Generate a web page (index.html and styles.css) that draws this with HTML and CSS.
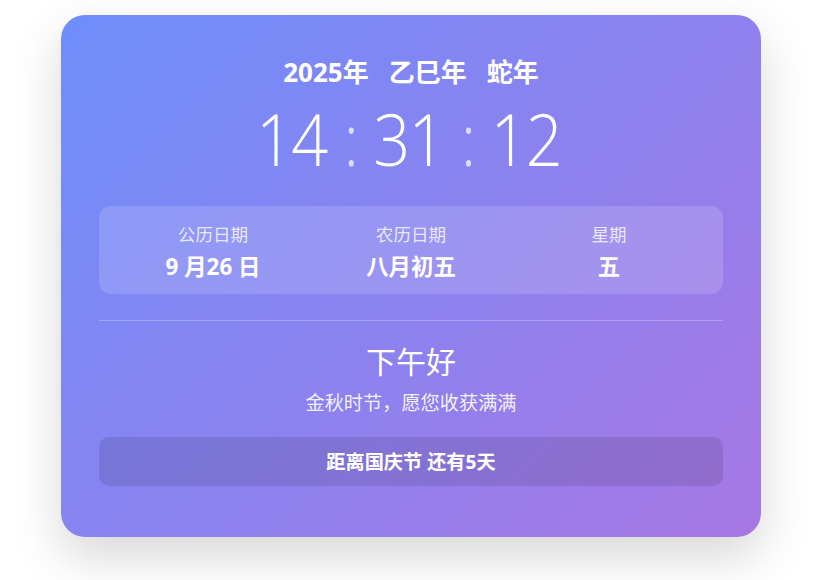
FILE: index.html
```html
<!DOCTYPE html>
<html lang="zh-CN">
<head>
<meta charset="utf-8">
<title>时钟</title>
<link rel="stylesheet" href="styles.css">
</head>
<body>
<div class="card">
  <div class="year-line">
    <span>2025年</span>
    <span>乙巳年</span>
    <span>蛇年</span>
  </div>
  <div class="clock">
    <span class="clock-inner"><span class="num">14</span><span class="colon">:</span><span class="num">31</span><span class="colon">:</span><span class="num">12</span></span>
  </div>
  <div class="info">
    <div class="info-item">
      <div class="info-label">公历日期</div>
      <div class="info-value">9 月26 日</div>
    </div>
    <div class="info-item">
      <div class="info-label">农历日期</div>
      <div class="info-value">八月初五</div>
    </div>
    <div class="info-item">
      <div class="info-label">星期</div>
      <div class="info-value">五</div>
    </div>
  </div>
  <div class="divider"></div>
  <div class="greeting">下午好</div>
  <div class="wish">金秋时节，愿您收获满满</div>
  <div class="countdown">距离国庆节 还有5天</div>
</div>
</body>
</html>
```

FILE: styles.css
```css
html, body {
  margin: 0;
  padding: 0;
  background: #ffffff;
}

body {
  min-height: 580px;
  padding: 15px 0 43px;
  box-sizing: border-box;
  font-family: "Open Sans", "Noto Sans CJK SC", sans-serif;
  color: #ffffff;
}

.card {
  box-sizing: border-box;
  width: 700px;
  margin: 0 0 0 61px;
  padding: 38px 38px 51px;
  border-radius: 24px;
  background: linear-gradient(135deg, #6e8efb 0%, #a777e3 100%);
  box-shadow: 0 20px 50px rgba(0, 0, 0, 0.16);
  text-align: center;
}

.year-line {
  display: flex;
  justify-content: center;
  gap: 20px;
  font-size: 26px;
  font-weight: 700;
  line-height: 38px;
  height: 38px;
}

.clock {
  margin-top: 2px;
  height: 90px;
  line-height: 90px;
  font-size: 72px;
  font-weight: 300;
  white-space: nowrap;
}

.clock-inner {
  display: inline-block;
  transform: scaleX(0.9);
  margin-right: 5px;
}

.clock .num {
  letter-spacing: -2px;
}

.clock .colon {
  margin: 0 16px 0 19px;
  opacity: 0.7;
}

.info {
  margin-top: 23px;
  display: grid;
  grid-template-columns: repeat(3, 1fr);
  padding: 16px 15px 12px;
  border-radius: 12px;
  background: rgba(255, 255, 255, 0.15);
}

.info-label {
  font-size: 17.6px;
  line-height: 24px;
  color: rgba(255, 255, 255, 0.8);
}

.info-value {
  margin-top: 6px;
  font-size: 22.4px;
  font-weight: 700;
  line-height: 30px;
}

.divider {
  margin-top: 26px;
  height: 1px;
  background: rgba(255, 255, 255, 0.25);
}

.greeting {
  margin-top: 21px;
  font-size: 30px;
  line-height: 40px;
}

.wish {
  margin-top: 7px;
  font-size: 19.2px;
  line-height: 28px;
  color: rgba(255, 255, 255, 0.9);
}

.countdown {
  margin-top: 20px;
  height: 49px;
  line-height: 49px;
  border-radius: 10px;
  background: rgba(0, 0, 0, 0.1);
  font-size: 19.2px;
  font-weight: 700;
}
```
